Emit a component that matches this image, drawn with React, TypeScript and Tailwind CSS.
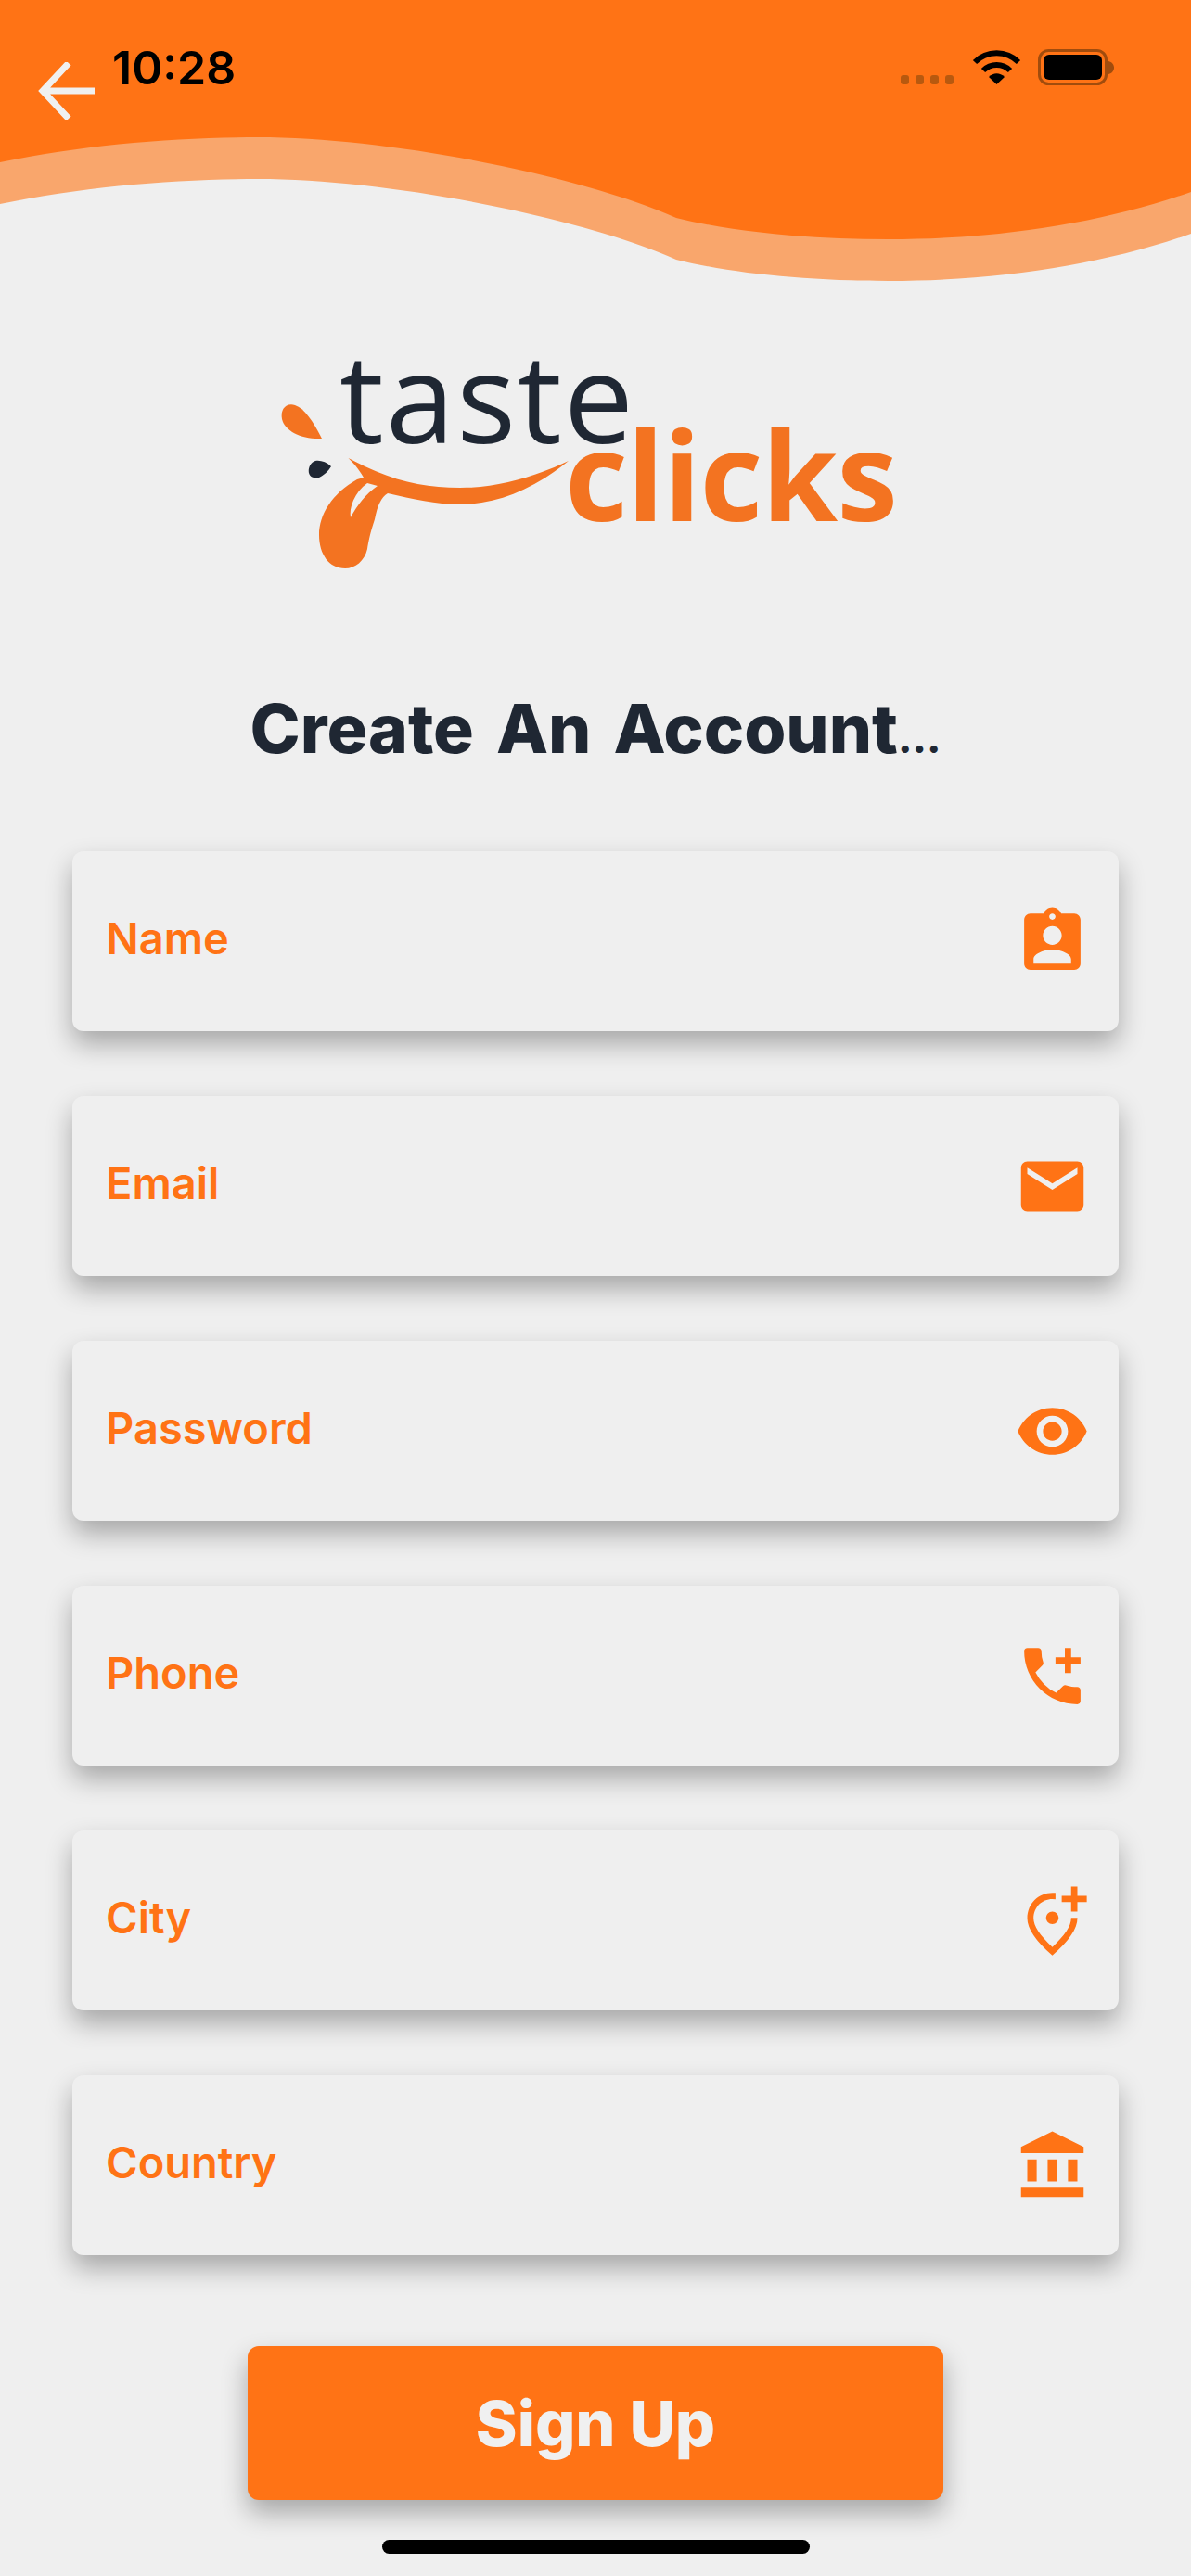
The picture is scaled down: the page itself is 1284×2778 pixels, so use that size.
import { MdAccountBalance, MdAddIcCall, MdAssignmentInd, MdEmail, MdOutlineAddLocationAlt, MdVisibility } from "react-icons/md";

const fields = [
  { label: "Name", Icon: MdAssignmentInd },
  { label: "Email", Icon: MdEmail },
  { label: "Password", Icon: MdVisibility },
  { label: "Phone", Icon: MdAddIcCall },
  { label: "City", Icon: MdOutlineAddLocationAlt },
  { label: "Country", Icon: MdAccountBalance },
];

const WAVE = "M0 0H1284V207C1190 240 1080 258 958 258C870 258 790 250 729 235C635 192 425 148 278 148C190 148 90 156 0 175Z";

function StatusIcons() {
  return (
    <svg width="240" height="42" viewBox="0 0 240 42" className="shrink-0">
      <g fill="#b8590f">
        <rect x="9" y="29" width="9" height="10" rx="3" />
        <rect x="25" y="29" width="9" height="10" rx="3" />
        <rect x="41" y="29" width="9" height="10" rx="3" />
        <rect x="57" y="29" width="9" height="10" rx="3" />
      </g>
      <g fill="none" stroke="#000" strokeWidth="6">
        <path d="M89 15C102 2 123 2 136 15" />
        <path d="M98 24C106 16 119 16 127 24" />
      </g>
      <path d="M112.500 39L104 31C109 26 116 26 121 31Z" fill="#000" />
      <rect x="158.500" y="2.500" width="72" height="36" rx="10" fill="none" stroke="#a14c0d" strokeWidth="3" />
      <rect x="163" y="7" width="63" height="27" rx="6" fill="#000" />
      <path d="M233 14C237 15 239 18 239 21C239 24 237 27 233 28Z" fill="#a14c0d" />
    </svg>
  );
}

function Logo() {
  return (
    <svg width="720" height="310" viewBox="0 -30 720 310" className="block">
      <text x="86" y="118" fill="#1f2733" fontSize="134" fontWeight="400" letterSpacing="2" style={{ fontFamily: '"Open Sans", sans-serif' }}>
        taste
      </text>
      <text x="329" y="202" fill="#f37321" fontSize="132" fontWeight="700" letterSpacing="-1" style={{ fontFamily: '"Open Sans", sans-serif' }}>
        clicks
      </text>
      <path d="M67 113C58 95 48 80 38 77C28 74 22 82 24 92C27 105 45 114 67 113Z" fill="#f37321" />
      <path d="M77 143C72 138 65 136 60 137C54 139 52 146 53 150C54 155 60 156 64 155C70 152 74 148 77 143Z" fill="#1f2733" />
      <path
        d="M95.500 134C140 158 175 166 216 166C255 166 295 155 333 137C295 168 255 184 216 184C190 184 165 178 138 172C131 176 127 185 124 200C119 215 117 225 116 232C113 245 103 253 92 253C75 253 64 238 64 217C64 195 78 172 105 157L112 155C108 148 102 140 95.500 134Z"
        fill="#f37321"
      />
      <path d="M116 161L127 164C114 173 105 185 98 198C96 188 102 171 116 161Z" fill="#efefef" />
    </svg>
  );
}

export default function App() {
  return (
    <div className="relative w-[1284px] h-[2778px] overflow-hidden bg-[#efefef]" style={{ fontFamily: "Inter, sans-serif" }}>
      <svg width="1284" height="320" viewBox="0 0 1284 320" className="block">
        <path d={WAVE} fill="#f9a66c" transform="translate(0 45)" />
        <path d={WAVE} fill="#ff7315" />
      </svg>

      {/* status bar + back arrow sit over the wave */}
      <div className="absolute top-[52px] left-0 w-full flex items-start justify-between pl-[41px] pr-[82px]">
        <div className="flex items-start gap-[18px]">
          <svg width="62" height="62" viewBox="0 0 62 62" className="mt-[15px]">
            <path d="M33 1L5 31L33 61M5 31H61" fill="none" stroke="#f0f0f0" strokeWidth="7" />
          </svg>
          <span className="text-[50px] leading-[42px] font-semibold text-black">10:28</span>
        </div>
        <StatusIcons />
      </div>

      <div className="mt-[10px] pl-[280px]">
        <Logo />
      </div>

      <h1 className="mt-[102px] text-center text-[73px] leading-[88px] font-extrabold text-[#1f2733] [word-spacing:8px]">
        Create An Account<span className="text-[44px]">...</span>
      </h1>

      <div className="mt-[78px] mx-[78px] flex flex-col gap-[70px]">
        {fields.map(({ label, Icon }) => (
          <div
            key={label}
            className="h-[194px] flex items-center justify-between pl-[36px] pr-[31px] rounded-[12px] bg-[#efefef] shadow-[0_14px_28px_rgba(0,0,0,0.3)]"
          >
            <span className="text-[47px] font-semibold text-[#ff7315] -mt-[6px]">{label}</span>
            <Icon size={81} color="#ff7315" />
          </div>
        ))}
      </div>

      <button className="block mt-[98px] mx-auto w-[750px] h-[166px] rounded-[12px] bg-[#ff7315] text-[68px] font-extrabold text-[#f0f0f0] shadow-[0_14px_28px_rgba(0,0,0,0.3)]">
        Sign Up
      </button>

      <div className="absolute top-[2739px] left-[412px] w-[461px] h-[15px] rounded-full bg-black" />
    </div>
  );
}
